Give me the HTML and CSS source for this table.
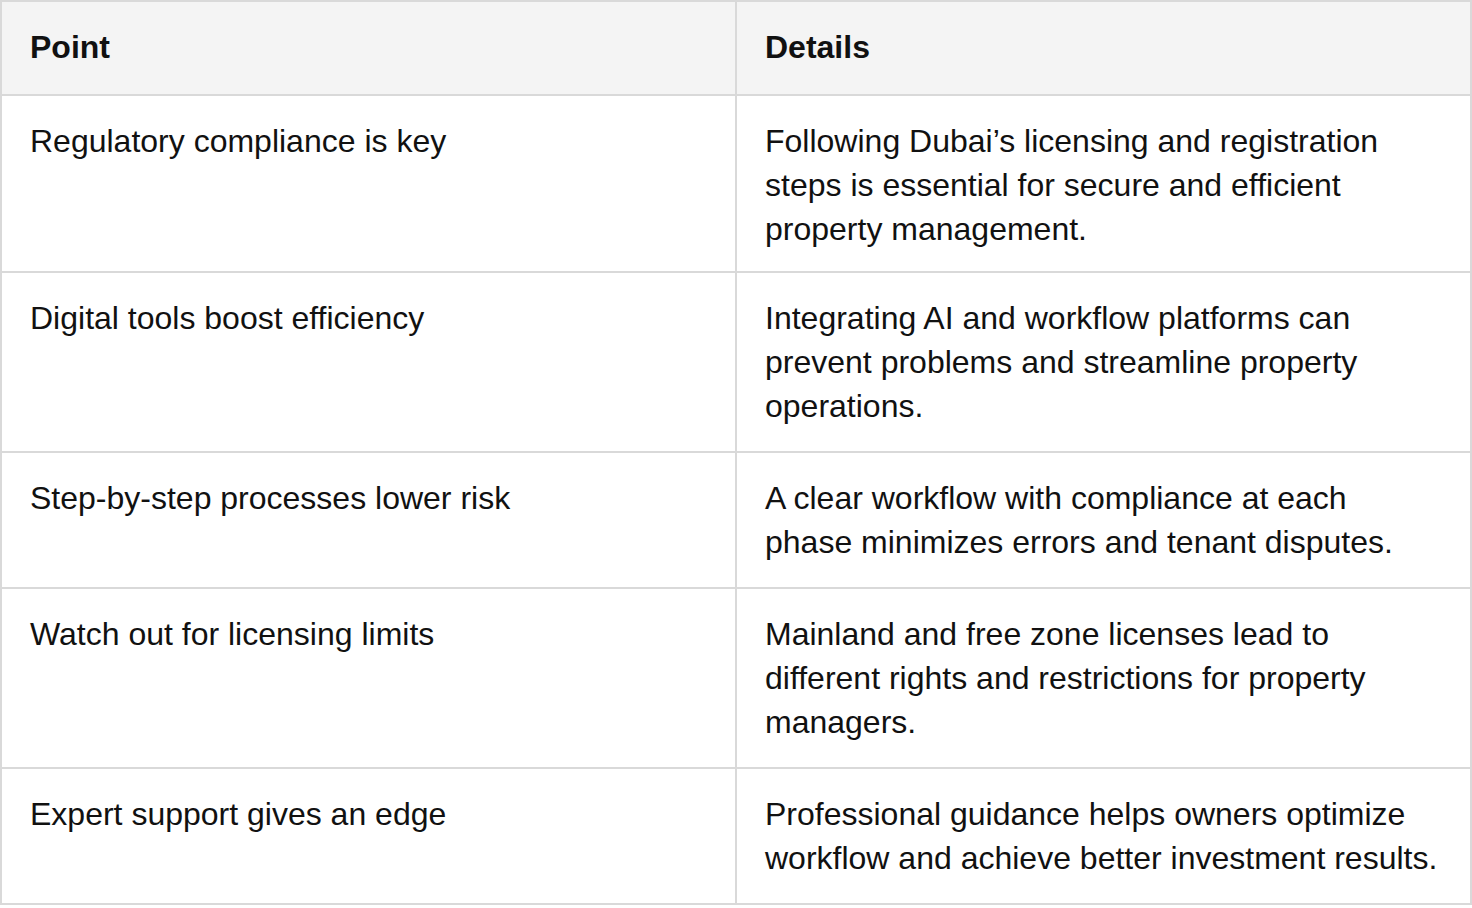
FILE: index.html
```html
<!DOCTYPE html>
<html lang="en">
<head>
<meta charset="utf-8">
<title>Key points</title>
<link rel="stylesheet" href="styles.css">
</head>
<body>
<table class="points">
  <thead>
    <tr><th>Point</th><th>Details</th></tr>
  </thead>
  <tbody>
    <tr class="first"><td>Regulatory compliance is key</td><td>Following Dubai’s licensing and registration steps is essential for secure and efficient property management.</td></tr>
    <tr><td>Digital tools boost efficiency</td><td>Integrating AI and workflow platforms can prevent problems and streamline property operations.</td></tr>
    <tr><td>Step-by-step processes lower risk</td><td>A clear workflow with compliance at each phase minimizes errors and tenant disputes.</td></tr>
    <tr><td>Watch out for licensing limits</td><td>Mainland and free zone licenses lead to different rights and restrictions for property managers.</td></tr>
    <tr><td>Expert support gives an edge</td><td>Professional guidance helps owners optimize workflow and achieve better investment results.</td></tr>
  </tbody>
</table>
</body>
</html>
```
FILE: styles.css
```css
html, body {
  margin: 0;
  padding: 0;
  background: #ffffff;
}
.points {
  width: 1472px;
  border-collapse: collapse;
  table-layout: fixed;
  font-family: "Liberation Sans", Arial, sans-serif;
  font-size: 32px;
  line-height: 44px;
  color: #111111;
}
.points th,
.points td {
  width: 50%;
  border: 2px solid #d9d9d9;
  padding: 23px 28px;
  text-align: left;
  vertical-align: top;
}
.points th {
  background: #f4f4f4;
  font-weight: bold;
  font-size: 32px;
  padding-top: 23px;
  padding-bottom: 25px;
}
.points .first td {
  padding-bottom: 20px;
}
```
